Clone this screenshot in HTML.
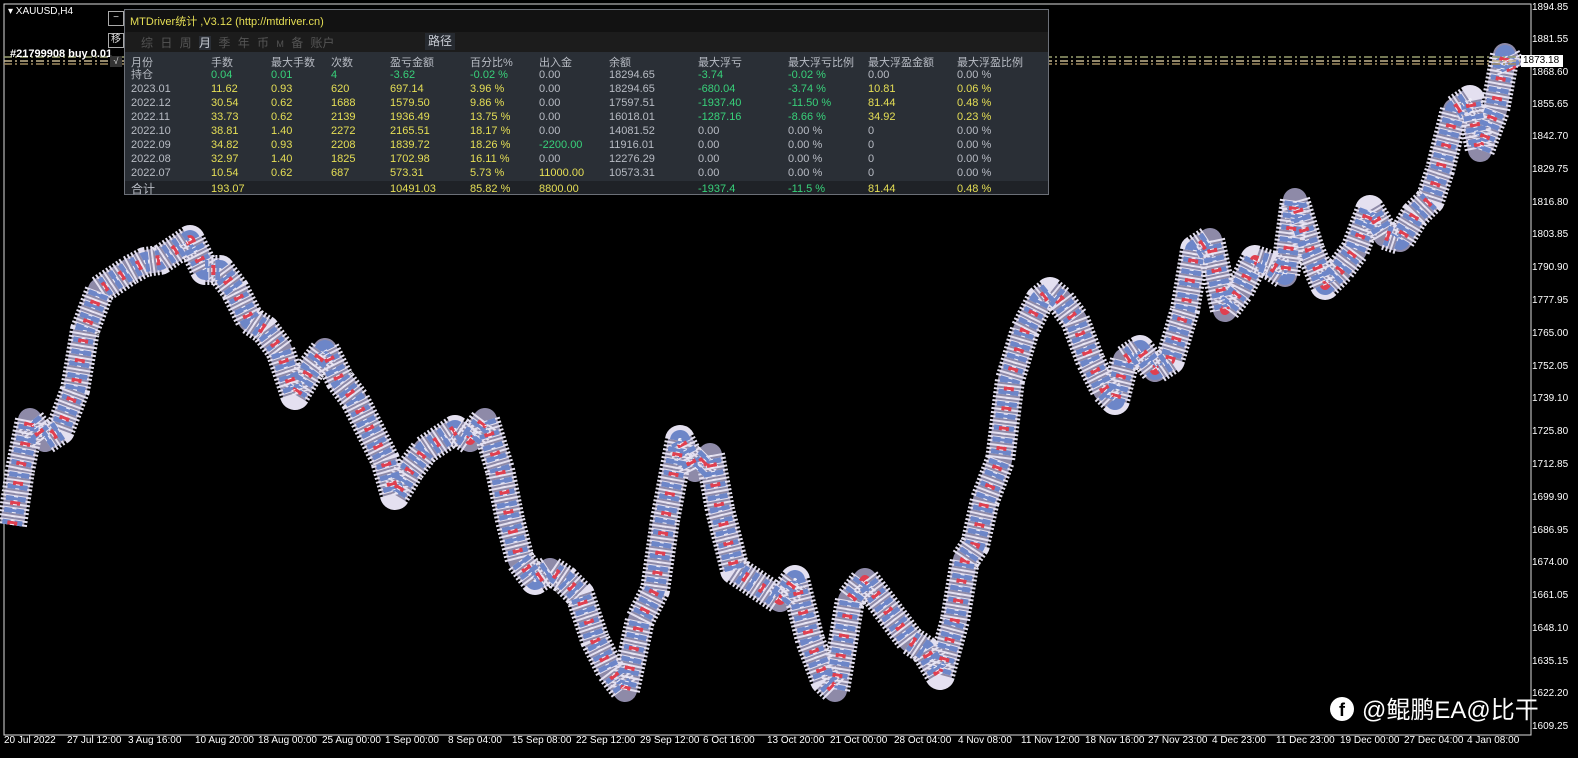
<!DOCTYPE html>
<html><head><meta charset="utf-8"><style>
html,body{margin:0;padding:0;background:#000;width:1578px;height:758px;overflow:hidden;font-family:"Liberation Sans","Noto Sans CJK SC",sans-serif}
.abs{position:absolute;white-space:nowrap}
#ax span{position:absolute;left:1532px;font-size:10px;color:#fff}
#bx span{position:absolute;top:735px;font-size:10px;color:#fff}
#panel{position:absolute;left:124px;top:9px;width:925px;height:186px;background:#121212;border:1px solid #6c7078;box-sizing:border-box}
.row{position:absolute;left:0;height:14px;font-size:11px;line-height:14px;width:923px}
.row span{position:absolute;top:0}
.g{color:#b8bcc4}.y{color:#e6df55}.gr{color:#38d17a}
</style></head><body>
<svg width="1578" height="758" style="position:absolute;left:0;top:0">
<defs>
<polyline id="p" points="12,525 20,470 30,420 45,440 60,430 75,390 85,330 100,290 115,280 130,270 145,262 160,260 175,250 190,240 205,270 220,270 235,290 250,320 265,330 280,350 295,395 310,370 325,350 340,380 355,400 370,430 385,460 395,495 410,470 425,450 440,440 455,430 470,440 485,420 500,470 510,520 520,560 535,580 550,570 565,580 580,595 595,640 610,670 625,690 640,620 655,590 665,520 680,440 695,470 710,455 720,510 735,570 750,580 765,590 780,600 795,580 810,640 825,680 835,690 850,600 865,580 880,600 895,620 910,640 925,650 940,675 955,620 965,560 975,545 985,500 1000,460 1010,380 1025,330 1040,300 1050,292 1060,300 1075,320 1090,360 1105,390 1115,400 1125,360 1140,350 1155,370 1170,360 1185,310 1195,250 1210,240 1225,310 1240,290 1255,260 1270,265 1285,275 1295,200 1310,250 1325,285 1340,270 1355,250 1370,210 1385,235 1400,240 1415,215 1430,200 1440,170 1455,110 1470,100 1480,150 1495,110 1505,55 1512,70"/>
</defs>
<rect x="4" y="4" width="1527" height="731" fill="none" stroke="#ddd" stroke-width="1"/>
<g fill="none" stroke-linejoin="round" stroke-linecap="butt">
<use href="#p" stroke="#8e8aa8" stroke-width="24"/>
<use href="#p" stroke="#e4e0f0" stroke-width="30" stroke-dasharray="2 2"/>
<use href="#p" stroke="#6d86c8" stroke-width="20" stroke-dasharray="5 7"/>
<use href="#p" stroke="#e04050" stroke-width="10" stroke-dasharray="4 16"/>
<use href="#p" stroke="#f0eef8" stroke-width="4" stroke-dasharray="1 3"/>
</g>
<g stroke-width="1.5" stroke-dasharray="8 3 2 3">
<line x1="4" y1="57" x2="1520" y2="57" stroke="#9aa070"/>
<line x1="4" y1="61" x2="1520" y2="61" stroke="#c8b890"/>
<line x1="4" y1="64" x2="1520" y2="64" stroke="#a08a60"/>
</g>
<rect x="1521" y="55" width="42" height="12" fill="#fff"/>
</svg>
<div class="abs" style="left:8px;top:6px;font-size:10px;color:#fff">▾ XAUUSD,H4</div>
<div class="abs" style="left:10px;top:48px;font-size:11px;color:#fff;font-weight:bold">#21799908 buy 0.01</div>
<div class="abs" style="left:108px;top:11px;width:14px;height:13px;border:1px solid #aaa;color:#ddd;font-size:10px;line-height:12px;text-align:center">−</div>
<div class="abs" style="left:108px;top:33px;width:14px;height:13px;border:1px solid #aaa;color:#ddd;font-size:10px;line-height:12px;text-align:center">移</div>
<div class="abs" style="left:110px;top:56px;width:12px;height:11px;background:#333;color:#ddd;font-size:9px;text-align:center">√</div>
<div id="panel">
<div class="abs" style="left:5px;top:3px;font-size:11px;color:#e6df55">MTDriver统计 ,V3.12 (http://mtdriver.cn)</div>
<div class="abs" style="left:0;top:22px;width:923px;height:20px;background:#1c1c1c"></div>
<div class="abs" style="left:16px;top:24px;font-size:12px;color:#555;word-spacing:4px">综 日 周 <span style="color:#c8ccd4;background:#2a2e35">月</span> 季 年 币 <span style="font-size:9px">M</span> 备 账户</div>
<div class="abs" style="left:300px;top:23px;width:30px;height:17px;background:#262a30;color:#c8ccd4;font-size:12px;text-align:center;line-height:17px">路径</div>
<div class="abs" style="left:0;top:42px;width:923px;height:142px;background:#2a2f36"></div>
<div class="abs" style="left:0;top:171px;width:923px;height:13px;background:#1f2227"></div>
<div class="row g" style="top:46px"><span style="left:6px">月份</span><span style="left:86px">手数</span><span style="left:146px">最大手数</span><span style="left:206px">次数</span><span style="left:265px">盈亏金额</span><span style="left:345px">百分比%</span><span style="left:414px">出入金</span><span style="left:484px">余额</span><span style="left:573px">最大浮亏</span><span style="left:663px">最大浮亏比例</span><span style="left:743px">最大浮盈金额</span><span style="left:832px">最大浮盈比例</span></div>
<div class="row" style="top:58px"><span class="g" style="left:6px">持仓</span><span class="gr" style="left:86px">0.04</span><span class="gr" style="left:146px">0.01</span><span class="gr" style="left:206px">4</span><span class="gr" style="left:265px">-3.62</span><span class="gr" style="left:345px">-0.02 %</span><span class="g" style="left:414px">0.00</span><span class="g" style="left:484px">18294.65</span><span class="gr" style="left:573px">-3.74</span><span class="gr" style="left:663px">-0.02 %</span><span class="g" style="left:743px">0.00</span><span class="g" style="left:832px">0.00 %</span></div>
<div class="row" style="top:72px"><span class="g" style="left:6px">2023.01</span><span class="y" style="left:86px">11.62</span><span class="y" style="left:146px">0.93</span><span class="y" style="left:206px">620</span><span class="y" style="left:265px">697.14</span><span class="y" style="left:345px">3.96 %</span><span class="g" style="left:414px">0.00</span><span class="g" style="left:484px">18294.65</span><span class="gr" style="left:573px">-680.04</span><span class="gr" style="left:663px">-3.74 %</span><span class="y" style="left:743px">10.81</span><span class="y" style="left:832px">0.06 %</span></div>
<div class="row" style="top:86px"><span class="g" style="left:6px">2022.12</span><span class="y" style="left:86px">30.54</span><span class="y" style="left:146px">0.62</span><span class="y" style="left:206px">1688</span><span class="y" style="left:265px">1579.50</span><span class="y" style="left:345px">9.86 %</span><span class="g" style="left:414px">0.00</span><span class="g" style="left:484px">17597.51</span><span class="gr" style="left:573px">-1937.40</span><span class="gr" style="left:663px">-11.50 %</span><span class="y" style="left:743px">81.44</span><span class="y" style="left:832px">0.48 %</span></div>
<div class="row" style="top:100px"><span class="g" style="left:6px">2022.11</span><span class="y" style="left:86px">33.73</span><span class="y" style="left:146px">0.62</span><span class="y" style="left:206px">2139</span><span class="y" style="left:265px">1936.49</span><span class="y" style="left:345px">13.75 %</span><span class="g" style="left:414px">0.00</span><span class="g" style="left:484px">16018.01</span><span class="gr" style="left:573px">-1287.16</span><span class="gr" style="left:663px">-8.66 %</span><span class="y" style="left:743px">34.92</span><span class="y" style="left:832px">0.23 %</span></div>
<div class="row" style="top:114px"><span class="g" style="left:6px">2022.10</span><span class="y" style="left:86px">38.81</span><span class="y" style="left:146px">1.40</span><span class="y" style="left:206px">2272</span><span class="y" style="left:265px">2165.51</span><span class="y" style="left:345px">18.17 %</span><span class="g" style="left:414px">0.00</span><span class="g" style="left:484px">14081.52</span><span class="g" style="left:573px">0.00</span><span class="g" style="left:663px">0.00 %</span><span class="g" style="left:743px">0</span><span class="g" style="left:832px">0.00 %</span></div>
<div class="row" style="top:128px"><span class="g" style="left:6px">2022.09</span><span class="y" style="left:86px">34.82</span><span class="y" style="left:146px">0.93</span><span class="y" style="left:206px">2208</span><span class="y" style="left:265px">1839.72</span><span class="y" style="left:345px">18.26 %</span><span class="gr" style="left:414px">-2200.00</span><span class="g" style="left:484px">11916.01</span><span class="g" style="left:573px">0.00</span><span class="g" style="left:663px">0.00 %</span><span class="g" style="left:743px">0</span><span class="g" style="left:832px">0.00 %</span></div>
<div class="row" style="top:142px"><span class="g" style="left:6px">2022.08</span><span class="y" style="left:86px">32.97</span><span class="y" style="left:146px">1.40</span><span class="y" style="left:206px">1825</span><span class="y" style="left:265px">1702.98</span><span class="y" style="left:345px">16.11 %</span><span class="g" style="left:414px">0.00</span><span class="g" style="left:484px">12276.29</span><span class="g" style="left:573px">0.00</span><span class="g" style="left:663px">0.00 %</span><span class="g" style="left:743px">0</span><span class="g" style="left:832px">0.00 %</span></div>
<div class="row" style="top:156px"><span class="g" style="left:6px">2022.07</span><span class="y" style="left:86px">10.54</span><span class="y" style="left:146px">0.62</span><span class="y" style="left:206px">687</span><span class="y" style="left:265px">573.31</span><span class="y" style="left:345px">5.73 %</span><span class="y" style="left:414px">11000.00</span><span class="g" style="left:484px">10573.31</span><span class="g" style="left:573px">0.00</span><span class="g" style="left:663px">0.00 %</span><span class="g" style="left:743px">0</span><span class="g" style="left:832px">0.00 %</span></div>
<div class="row" style="top:172px"><span class="g" style="left:6px;font-size:12px">合计</span><span class="y" style="left:86px">193.07</span><span class="y" style="left:265px">10491.03</span><span class="y" style="left:345px">85.82 %</span><span class="y" style="left:414px">8800.00</span><span class="gr" style="left:573px">-1937.4</span><span class="gr" style="left:663px">-11.5 %</span><span class="y" style="left:743px">81.44</span><span class="y" style="left:832px">0.48 %</span></div>
</div>
<div id="ax">
<span style="top:2px">1894.85</span><span style="top:34px">1881.55</span><span style="top:55px;color:#000;font-size:10px;left:1523px">1873.18</span><span style="top:67px">1868.60</span><span style="top:99px">1855.65</span><span style="top:131px">1842.70</span><span style="top:164px">1829.75</span><span style="top:197px">1816.80</span><span style="top:229px">1803.85</span><span style="top:262px">1790.90</span><span style="top:295px">1777.95</span><span style="top:328px">1765.00</span><span style="top:361px">1752.05</span><span style="top:393px">1739.10</span><span style="top:426px">1725.80</span><span style="top:459px">1712.85</span><span style="top:492px">1699.90</span><span style="top:525px">1686.95</span><span style="top:557px">1674.00</span><span style="top:590px">1661.05</span><span style="top:623px">1648.10</span><span style="top:656px">1635.15</span><span style="top:688px">1622.20</span><span style="top:721px">1609.25</span>
</div>
<div id="bx">
<span style="left:4px">20 Jul 2022</span><span style="left:67px">27 Jul 12:00</span><span style="left:128px">3 Aug 16:00</span><span style="left:195px">10 Aug 20:00</span><span style="left:258px">18 Aug 00:00</span><span style="left:322px">25 Aug 00:00</span><span style="left:385px">1 Sep 00:00</span><span style="left:448px">8 Sep 04:00</span><span style="left:512px">15 Sep 08:00</span><span style="left:576px">22 Sep 12:00</span><span style="left:640px">29 Sep 12:00</span><span style="left:703px">6 Oct 16:00</span><span style="left:767px">13 Oct 20:00</span><span style="left:830px">21 Oct 00:00</span><span style="left:894px">28 Oct 04:00</span><span style="left:958px">4 Nov 08:00</span><span style="left:1021px">11 Nov 12:00</span><span style="left:1085px">18 Nov 16:00</span><span style="left:1148px">27 Nov 23:00</span><span style="left:1212px">4 Dec 23:00</span><span style="left:1276px">11 Dec 23:00</span><span style="left:1340px">19 Dec 00:00</span><span style="left:1404px">27 Dec 04:00</span><span style="left:1467px">4 Jan 08:00</span>
</div>
<div class="abs" style="left:1330px;top:697px;width:24px;height:24px;border-radius:50%;background:#fff;color:#000;font-weight:bold;font-size:18px;text-align:center;line-height:26px">f</div>
<div class="abs" style="left:1362px;top:690px;font-size:24px;color:#fff">@鲲鹏EA@比干</div>
</body></html>
